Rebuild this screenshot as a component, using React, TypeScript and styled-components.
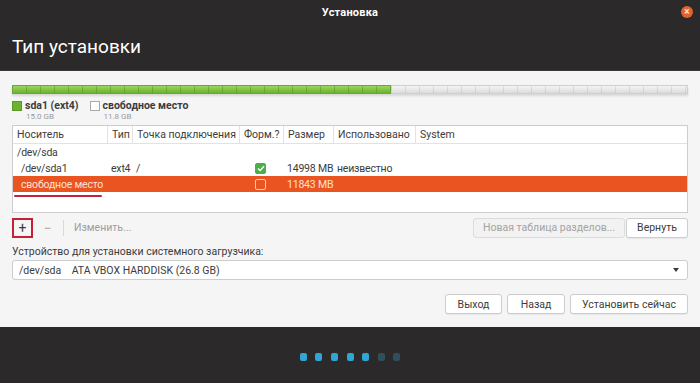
import styled, { createGlobalStyle } from 'styled-components'

const GlobalStyle = createGlobalStyle`
  html, body {
    margin: 0;
    padding: 0;
    background: #2b2929;
  }
  body {
    font-family: Roboto, "Open Sans", sans-serif;
    color: #3c3c3c;
  }
`

const Window = styled.div`
  width: 700px;
  height: 383px;
  display: flex;
  flex-direction: column;
  overflow: hidden;
`

const Header = styled.div`
  background: #2b2929;
  height: 71px;
  display: flex;
  flex-direction: column;
  color: #fff;
  border-bottom: 1px solid #3a3838;
  box-sizing: border-box;
`

const TitleBar = styled.div`
  height: 24px;
  display: grid;
  grid-template-columns: 1fr auto 1fr;
  align-items: center;
  font-size: 11px;
  font-weight: 700;
  letter-spacing: 0.2px;
`

const Close = styled.div`
  justify-self: end;
  margin-right: 7px;
  width: 12px;
  height: 12px;
  border-radius: 50%;
  background: #e0622f;
  color: #fbe3d8;
  font-size: 10px;
  line-height: 12px;
  text-align: center;
  font-weight: 700;
`

const Heading = styled.h1`
  margin: 12px 0 0 12px;
  font-size: 19px;
  line-height: 22px;
  font-weight: 400;
`

const Main = styled.div`
  flex: 1;
  background: #f5f5f6;
  padding: 14px 12px 0;
  display: flex;
  flex-direction: column;
  font-size: 10.5px;
`

const Bar = styled.div`
  height: 9px;
  display: flex;
  box-shadow: 0 2px 2px rgba(0, 0, 0, 0.12);
`

const Segment = styled.div<{ $share: number; $used?: boolean }>`
  flex: 0 0 ${p => p.$share}%;
  background:
    repeating-linear-gradient(90deg, transparent 0 13px, ${p => (p.$used ? 'rgba(60,120,20,0.35)' : 'rgba(0,0,0,0.08)')} 13px 14px),
    ${p => (p.$used ? 'linear-gradient(#9bd65b, #6cb22f)' : 'linear-gradient(#f4f4f4, #dcdcdc)')};
  border: 1px solid ${p => (p.$used ? '#6aa835' : '#cfcfcf')};
  box-sizing: border-box;
`

const Legend = styled.div`
  display: flex;
  gap: 11px;
  margin-top: 6px;
`

const LegendItem = styled.div`
  display: grid;
  grid-template-columns: 10px auto;
  column-gap: 3px;
  align-items: center;
`

const Swatch = styled.span<{ $used?: boolean }>`
  width: 10px;
  height: 10px;
  box-sizing: border-box;
  background: ${p => (p.$used ? '#6cb22f' : '#fff')};
  border: 1px solid ${p => (p.$used ? '#5c9a28' : '#a8a8a8')};
`

const LegendName = styled.span`
  font-weight: 700;
  color: #3c3c3c;
  line-height: 12px;
`

const LegendSize = styled.span`
  grid-column: 2;
  padding-left: 1px;
  font-size: 8px;
  color: #9a9a9a;
  line-height: 10px;
`

const Table = styled.div`
  margin-top: 3px;
  height: 88px;
  background: #fff;
  border: 1px solid #cdcdcd;
  box-sizing: border-box;
  position: relative;
`

const Row = styled.div<{ $selected?: boolean; $head?: boolean }>`
  display: grid;
  grid-template-columns: 94px 25px 107px 44px 50px 82px 1fr;
  height: ${p => (p.$head ? '17px' : '16px')};
  align-items: center;
  background: ${p => (p.$selected ? '#e95420' : 'transparent')};
  color: ${p => (p.$selected ? '#fde2d4' : '#3c3c3c')};
  border-bottom: ${p => (p.$head ? '1px solid #e2e2e2' : 'none')};
  letter-spacing: ${p => (p.$head ? '0' : '-0.2px')};
`

const Cell = styled.div<{ $head?: boolean; $indent?: number }>`
  padding-left: ${p => 4 + (p.$indent ?? 0)}px;
  white-space: nowrap;
  height: 100%;
  display: flex;
  align-items: center;
  border-left: ${p => (p.$head ? '1px solid #e2e2e2' : 'none')};
  &:first-child {
    border-left: none;
  }
`

const Check = styled.span<{ $on?: boolean }>`
  width: 11px;
  height: 11px;
  margin-left: 12px;
  border-radius: 2px;
  box-sizing: border-box;
  background: ${p => (p.$on ? '#4fae4c' : 'transparent')};
  border: 1px solid ${p => (p.$on ? '#4fae4c' : '#fbcdb8')};
  display: flex;
  align-items: center;
  justify-content: center;
`

const Underline = styled.div`
  position: absolute;
  left: 1px;
  top: 69px;
  width: 88px;
  height: 2px;
  background: #c0233b;
  border-radius: 1px;
`

const Toolbar = styled.div`
  display: flex;
  align-items: center;
  margin-top: 4px;
  height: 21px;
`

const IconButton = styled.div<{ $marked?: boolean }>`
  width: 21px;
  height: 20px;
  box-sizing: border-box;
  border: 2px solid ${p => (p.$marked ? '#c81f37' : 'transparent')};
  display: flex;
  align-items: center;
  justify-content: center;
  font-size: 14px;
  color: ${p => (p.$marked ? '#3c3c3c' : '#a8a8a8')};
  margin-right: ${p => (p.$marked ? '4px' : '0')};
`

const Separator = styled.span`
  width: 1px;
  height: 16px;
  background: #d9d9d9;
  margin: 0 10px 0 5px;
`

const ToolLabel = styled.span`
  color: #9d9d9d;
  flex: 1;
`

const Button = styled.div<{ $disabled?: boolean; $w: number }>`
  width: ${p => p.$w}px;
  height: 20px;
  box-sizing: border-box;
  display: flex;
  align-items: center;
  justify-content: center;
  border: 1px solid ${p => (p.$disabled ? '#dcdcdc' : '#cdcdcd')};
  border-radius: 3px;
  background: ${p => (p.$disabled ? '#f2f2f2' : '#fff')};
  color: ${p => (p.$disabled ? '#a3a3a3' : '#3c3c3c')};
  box-shadow: ${p => (p.$disabled ? 'none' : '0 1px 1px rgba(0,0,0,0.06)')};
  white-space: nowrap;
`

const ButtonGroup = styled.div<{ $gap: number }>`
  display: flex;
  gap: ${p => p.$gap}px;
  justify-content: flex-end;
`

const FieldLabel = styled.div`
  margin-top: 7px;
  line-height: 13px;
`

const Select = styled.div`
  margin-top: 2px;
  height: 20px;
  box-sizing: border-box;
  border: 1px solid #cdcdcd;
  border-radius: 3px;
  background: #fff;
  display: flex;
  align-items: center;
  padding: 0 8px 0 6px;
`

const SelectText = styled.span`
  flex: 1;
  white-space: pre;
`

const Arrow = styled.span`
  width: 0;
  height: 0;
  border-left: 3.5px solid transparent;
  border-right: 3.5px solid transparent;
  border-top: 4px solid #3c3c3c;
`

const Actions = styled(ButtonGroup)`
  margin-top: 14px;
`

const Footer = styled.div`
  height: 56px;
  background: #2b2929;
  display: flex;
  align-items: center;
  justify-content: center;
  gap: 8.6px;
  padding-top: 4px;
  box-sizing: border-box;
`

const Dot = styled.span<{ $done?: boolean }>`
  width: 7px;
  height: 8px;
  border-radius: 2px;
  background: ${p => (p.$done ? '#2fa6d6' : '#2e4f5b')};
`

const columns = ['Носитель', 'Тип', 'Точка подключения', 'Форм.?', 'Размер', 'Использовано', 'System']

export default function App() {
  return (
    <>
      <GlobalStyle />
      <Window>
        <Header>
          <TitleBar>
            <span />
            <span>Установка</span>
            <Close>×</Close>
          </TitleBar>
          <Heading>Тип установки</Heading>
        </Header>
        <Main>
          <Bar>
            <Segment $share={56} $used />
            <Segment $share={44} />
          </Bar>
          <Legend>
            <LegendItem>
              <Swatch $used />
              <LegendName>sda1 (ext4)</LegendName>
              <LegendSize>15.0 GB</LegendSize>
            </LegendItem>
            <LegendItem>
              <Swatch />
              <LegendName>свободное место</LegendName>
              <LegendSize>11.8 GB</LegendSize>
            </LegendItem>
          </Legend>
          <Table>
            <Row $head>
              {columns.map(c => (
                <Cell $head key={c}>{c}</Cell>
              ))}
            </Row>
            <Row>
              <Cell>/dev/sda</Cell>
            </Row>
            <Row>
              <Cell $indent={4}>/dev/sda1</Cell>
              <Cell>ext4</Cell>
              <Cell>/</Cell>
              <Cell>
                <Check $on>
                  <svg width="8" height="7" viewBox="0 0 8 7">
                    <path d="M1 3.6 L3.1 5.6 L7 1.2" fill="none" stroke="#fff" strokeWidth="1.4" />
                  </svg>
                </Check>
              </Cell>
              <Cell>14998 MB</Cell>
              <Cell>неизвестно</Cell>
              <Cell />
            </Row>
            <Row $selected>
              <Cell $indent={4}>свободное место</Cell>
              <Cell />
              <Cell />
              <Cell>
                <Check />
              </Cell>
              <Cell>11843 MB</Cell>
              <Cell />
              <Cell />
            </Row>
            <Underline />
          </Table>
          <Toolbar>
            <IconButton $marked>+</IconButton>
            <IconButton>−</IconButton>
            <Separator />
            <ToolLabel>Изменить...</ToolLabel>
            <ButtonGroup $gap={1}>
              <Button $disabled $w={152}>Новая таблица разделов...</Button>
              <Button $w={62}>Вернуть</Button>
            </ButtonGroup>
          </Toolbar>
          <FieldLabel>Устройство для установки системного загрузчика:</FieldLabel>
          <Select>
            <SelectText>/dev/sda    ATA VBOX HARDDISK (26.8 GB)</SelectText>
            <Arrow />
          </Select>
          <Actions $gap={5}>
            <Button $w={57}>Выход</Button>
            <Button $w={58}>Назад</Button>
            <Button $w={118}>Установить сейчас</Button>
          </Actions>
        </Main>
        <Footer>
          {[1, 2, 3, 4, 5, 6, 7].map(i => (
            <Dot key={i} $done={i <= 5} />
          ))}
        </Footer>
      </Window>
    </>
  )
}
